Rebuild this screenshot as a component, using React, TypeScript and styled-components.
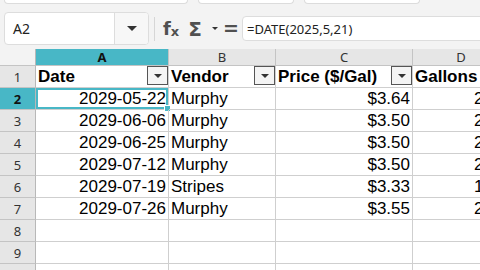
import { Fragment } from 'react';
import styled, { createGlobalStyle } from 'styled-components';

const GlobalStyle = createGlobalStyle`
  html, body {
    margin: 0;
    padding: 0;
    background: #f3f3f3;
    overflow: hidden;
  }
  body {
    width: 480px;
    height: 270px;
    font-family: 'Noto Sans', 'Open Sans', sans-serif;
  }
`;

const Page = styled.div`
  width: 480px;
  height: 270px;
  display: flex;
  flex-direction: column;
  overflow: hidden;
`;

const TopStrip = styled.div`
  flex-shrink: 0;
  height: 4px;
  display: flex;
  padding-left: 4px;
  gap: 10px;
`;

const Stub = styled.div<{ $w: number }>`
  width: ${p => p.$w}px;
  height: 3px;
  background: #fff;
  border: 1px solid #dcdcdc;
  border-top: none;
  border-radius: 0 0 4px 4px;
`;

const FormulaBar = styled.div`
  flex-shrink: 0;
  height: 45px;
  display: flex;
  align-items: center;
  padding: 0 0 0 4px;
`;

const NameBox = styled.div`
  width: 143px;
  height: 31px;
  margin-top: 4px;
  display: flex;
  background: #fff;
  border: 1px solid #dddddd;
  border-radius: 4px;
  overflow: hidden;
`;

const NameText = styled.div`
  flex: 1;
  display: flex;
  align-items: center;
  padding-left: 8px;
  font-size: 14px;
  color: #222;
  border-right: 1px solid #dddddd;
`;

const NameDrop = styled.div`
  width: 33px;
  display: flex;
  align-items: center;
  justify-content: center;
  background: #f7f7f7;
`;

const Caret = styled.span<{ $size: number }>`
  width: 0;
  height: 0;
  border-left: ${p => p.$size}px solid transparent;
  border-right: ${p => p.$size}px solid transparent;
  border-top: ${p => p.$size}px solid #333;
`;

const Divider = styled.div`
  width: 1px;
  height: 24px;
  margin: 4px 7px 0 5px;
  background: #d6d6d6;
`;

const Tool = styled.span<{ $w: number; $size?: number }>`
  width: ${p => p.$w}px;
  display: flex;
  align-items: center;
  justify-content: center;
  margin-top: 4px;
  color: #505050;
  font-family: 'DejaVu Sans', sans-serif;
  font-weight: bold;
  font-size: ${p => p.$size ?? 18}px;
  line-height: 1;
`;

const Sub = styled.span`
  font-size: 13px;
  margin-top: 5px;
`;

const FormulaInput = styled.div`
  flex: 1;
  height: 23px;
  margin: 4px -6px 0 4px;
  display: flex;
  align-items: center;
  padding-left: 4px;
  background: #fff;
  border: 1px solid #dddddd;
  border-radius: 4px;
  font-size: 13px;
  color: #222;
`;

const Sheet = styled.div`
  flex-shrink: 0;
  display: grid;
  grid-template-columns: 36px 133px 107px 137px 97px;
  grid-template-rows: 17px repeat(10, 22px);
  background: #fff;
`;

const ColHead = styled.div<{ $active?: boolean }>`
  display: flex;
  align-items: center;
  justify-content: center;
  font-size: 13px;
  background: ${p => (p.$active ? '#48b7c6' : '#e6e6e6')};
  font-weight: ${p => (p.$active ? 'bold' : 'normal')};
  color: ${p => (p.$active ? '#111' : '#333')};
  border-right: 1px solid #c4c4c4;
  border-bottom: 1px solid #c4c4c4;
`;

const Corner = styled(ColHead)`
  background: #f3f3f3;
  border-right: 1px solid #b8b8b8;
`;

const RowHead = styled.div<{ $active?: boolean }>`
  display: flex;
  align-items: center;
  justify-content: center;
  font-size: 13px;
  background: ${p => (p.$active ? '#48b7c6' : '#e6e6e6')};
  font-weight: ${p => (p.$active ? 'bold' : 'normal')};
  color: ${p => (p.$active ? '#111' : '#333')};
  border-right: 1px solid #b8b8b8;
  border-bottom: 1px solid #c4c4c4;
`;

const Cell = styled.div<{ $right?: boolean; $bold?: boolean }>`
  position: relative;
  display: flex;
  align-items: center;
  justify-content: ${p => (p.$right ? 'flex-end' : 'flex-start')};
  padding: 0 2px;
  font-family: 'Liberation Sans', Arial, sans-serif;
  font-size: 17px;
  font-weight: ${p => (p.$bold ? 'bold' : 'normal')};
  color: #000;
  border-right: 1px solid #cfcfcf;
  border-bottom: 1px solid #cfcfcf;
  white-space: nowrap;
  overflow: hidden;
`;

const HeadLabel = styled.span`
  flex: 1;
`;

const FilterButton = styled.span`
  width: 19px;
  height: 17px;
  margin-right: -2px;
  align-self: flex-start;
  display: flex;
  align-items: center;
  justify-content: center;
  border: 1px solid #555;
  background: #f4f4f4;
`;

const Selected = styled(Cell)`
  box-shadow: inset 0 0 0 2px #48b7c6;
  overflow: visible;
`;

const Handle = styled.span`
  position: absolute;
  right: -3px;
  bottom: -3px;
  width: 5px;
  height: 5px;
  background: #48b7c6;
  border: 1px solid #fff;
`;

const headers = ['Date', 'Vendor', 'Price ($/Gal)', 'Gallons'];

const rows = [
  ['2029-05-22', 'Murphy', '$3.64', '21.4'],
  ['2029-06-06', 'Murphy', '$3.50', '22.8'],
  ['2029-06-25', 'Murphy', '$3.50', '20.6'],
  ['2029-07-12', 'Murphy', '$3.50', '23.1'],
  ['2029-07-19', 'Stripes', '$3.33', '18.9'],
  ['2029-07-26', 'Murphy', '$3.55', '21.7'],
];

function App() {
  return (
    <Page>
      <GlobalStyle />
      <TopStrip>
        <Stub $w={182} />
        <Stub $w={94} />
        <Stub $w={114} />
      </TopStrip>
      <FormulaBar>
        <NameBox>
          <NameText>A2</NameText>
          <NameDrop><Caret $size={5} /></NameDrop>
        </NameBox>
        <Divider />
        <Tool $w={18}>f<Sub>x</Sub></Tool>
        <Tool $w={18} $size={20} style={{ marginLeft: 6 }}>Σ</Tool>
        <Tool $w={14} style={{ marginLeft: 4 }}><Caret $size={3} /></Tool>
        <Tool $w={14} $size={19} style={{ marginLeft: 2 }}>=</Tool>
        <FormulaInput>=DATE(2025,5,21)</FormulaInput>
      </FormulaBar>
      <Sheet>
        <Corner />
        <ColHead $active>A</ColHead>
        <ColHead>B</ColHead>
        <ColHead>C</ColHead>
        <ColHead>D</ColHead>

        <RowHead>1</RowHead>
        {headers.map((h, i) => (
          <Cell key={h} $bold>
            <HeadLabel>{h}</HeadLabel>
            {i < 3 && (
              <FilterButton><Caret $size={4} /></FilterButton>
            )}
          </Cell>
        ))}

        {rows.map((r, i) => (
          <Fragment key={r[0]}>
            <RowHead $active={i === 0}>{i + 2}</RowHead>
            {i === 0 ? (
              <Selected $right>{r[0]}<Handle /></Selected>
            ) : (
              <Cell $right>{r[0]}</Cell>
            )}
            <Cell>{r[1]}</Cell>
            <Cell $right>{r[2]}</Cell>
            <Cell $right>{r[3]}</Cell>
          </Fragment>
        ))}

        {[8, 9, 10].map(n => (
          <Fragment key={n}>
            <RowHead>{n}</RowHead>
            <Cell />
            <Cell />
            <Cell />
            <Cell />
          </Fragment>
        ))}
      </Sheet>
    </Page>
  );
}

export default App;
